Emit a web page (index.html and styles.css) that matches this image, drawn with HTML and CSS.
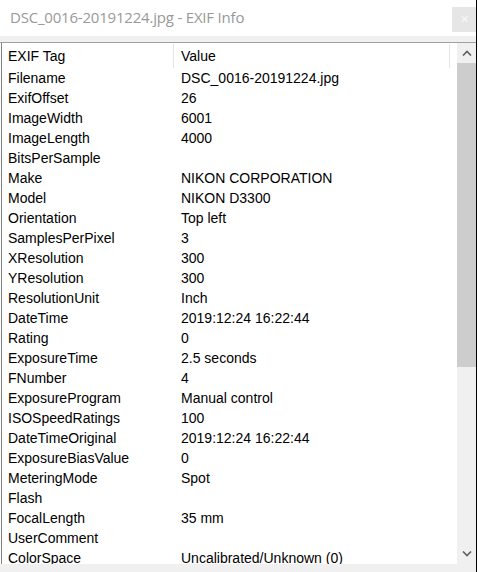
FILE: index.html
```html
<!DOCTYPE html>
<html lang="en">
<head>
  <meta charset="UTF-8" />
  <title>DSC_0016-20191224.jpg - EXIF Info</title>
  <link rel="stylesheet" href="styles.css">
</head>
<body>
  <div class="window">
    <div class="titlebar">
      <span class="title">DSC_0016-20191224.jpg - EXIF Info</span>
      <button class="close" aria-label="Close">&#x2715;</button>
    </div>

    <div class="client">
      <div class="list-frame">
        <div class="listview">
          <div class="rows">
            <div class="row header">
              <span class="cell tag">EXIF Tag</span>
              <span class="cell value">Value</span>
              <span class="cell filler"></span>
            </div>
            <div class="row"><span class="cell tag">Filename</span><span class="cell value">DSC_0016-20191224.jpg</span></div>
            <div class="row"><span class="cell tag">ExifOffset</span><span class="cell value">26</span></div>
            <div class="row"><span class="cell tag">ImageWidth</span><span class="cell value">6001</span></div>
            <div class="row"><span class="cell tag">ImageLength</span><span class="cell value">4000</span></div>
            <div class="row"><span class="cell tag">BitsPerSample</span><span class="cell value"></span></div>
            <div class="row"><span class="cell tag">Make</span><span class="cell value">NIKON CORPORATION</span></div>
            <div class="row"><span class="cell tag">Model</span><span class="cell value">NIKON D3300</span></div>
            <div class="row"><span class="cell tag">Orientation</span><span class="cell value">Top left</span></div>
            <div class="row"><span class="cell tag">SamplesPerPixel</span><span class="cell value">3</span></div>
            <div class="row"><span class="cell tag">XResolution</span><span class="cell value">300</span></div>
            <div class="row"><span class="cell tag">YResolution</span><span class="cell value">300</span></div>
            <div class="row"><span class="cell tag">ResolutionUnit</span><span class="cell value">Inch</span></div>
            <div class="row"><span class="cell tag">DateTime</span><span class="cell value">2019:12:24 16:22:44</span></div>
            <div class="row"><span class="cell tag">Rating</span><span class="cell value">0</span></div>
            <div class="row"><span class="cell tag">ExposureTime</span><span class="cell value">2.5 seconds</span></div>
            <div class="row"><span class="cell tag">FNumber</span><span class="cell value">4</span></div>
            <div class="row"><span class="cell tag">ExposureProgram</span><span class="cell value">Manual control</span></div>
            <div class="row"><span class="cell tag">ISOSpeedRatings</span><span class="cell value">100</span></div>
            <div class="row"><span class="cell tag">DateTimeOriginal</span><span class="cell value">2019:12:24 16:22:44</span></div>
            <div class="row"><span class="cell tag">ExposureBiasValue</span><span class="cell value">0</span></div>
            <div class="row"><span class="cell tag">MeteringMode</span><span class="cell value">Spot</span></div>
            <div class="row"><span class="cell tag">Flash</span><span class="cell value"></span></div>
            <div class="row"><span class="cell tag">FocalLength</span><span class="cell value">35 mm</span></div>
            <div class="row"><span class="cell tag">UserComment</span><span class="cell value"></span></div>
            <div class="row"><span class="cell tag">ColorSpace</span><span class="cell value">Uncalibrated/Unknown (0)</span></div>
          </div>

          <div class="scrollbar">
            <div class="arrow">
              <svg width="10" height="6" viewBox="0 0 10 6"><path d="M1 5.5 L5 1.5 L9 5.5" fill="none" stroke="#606060" stroke-width="1.6"/></svg>
            </div>
            <div class="track">
              <div class="thumb"></div>
            </div>
            <div class="arrow">
              <svg width="10" height="6" viewBox="0 0 10 6"><path d="M1 0.5 L5 4.5 L9 0.5" fill="none" stroke="#606060" stroke-width="1.6"/></svg>
            </div>
          </div>
        </div>
      </div>
    </div>
  </div>
</body>
</html>
```

FILE: styles.css
```css
html, body {
  margin: 0;
  background: #fff;
}

body {
  width: 478px;
  height: 572px;
  overflow: hidden;
}

.window {
  width: 476px;
  height: 572px;
  border-right: 1px solid #000;
  display: flex;
  flex-direction: column;
  font-family: 'Liberation Sans', Arial, sans-serif;
}

/* title bar */
.titlebar {
  flex: 0 0 36px;
  height: 36px;
  display: flex;
  align-items: flex-start;
  justify-content: space-between;
  background: #fff;
}

.title {
  font-family: 'Open Sans', 'Noto Sans', sans-serif;
  font-size: 15px;
  color: #999;
  margin: 7px 0 0 10px;
  letter-spacing: -0.2px;
}

.close {
  width: 24px;
  height: 25px;
  margin-top: 7px;
  padding: 0;
  border: none;
  background: #e6e6e6;
  color: #f7f7f7;
  font-size: 11px;
  line-height: 25px;
}

/* client area */
.client {
  flex: 1;
  min-height: 0;
  display: flex;
  flex-direction: column;
  background: #f0f0f0;
  padding: 6px 0 8px;
}

.list-frame {
  flex: 1;
  border-top: 1px solid #a0a0a0;
  background: #fff;
  padding-left: 1px;
  display: flex;
  min-height: 0;
}

.listview {
  flex: 1;
  display: flex;
  border-left: 1px solid #828282;
  min-height: 0;
}

.rows {
  flex: 1;
  overflow: hidden;
  padding-top: 1px;
  font-size: 14px;
  color: #000;
}

.row {
  display: grid;
  grid-template-columns: 172px 276px 1fr;
  height: 20px;
  line-height: 20px;
  white-space: nowrap;
}

.cell {
  padding-left: 6px;
  overflow: hidden;
}

.row .value {
  padding-left: 7px;
}

.header {
  height: 24px;
  line-height: 24px;
}

.header .tag,
.header .value {
  border-right: 1px solid #e5e5e5;
}

/* vertical scrollbar */
.scrollbar {
  width: 19px;
  display: flex;
  flex-direction: column;
  background: #f0f0f0;
}

.arrow {
  height: 20px;
  display: flex;
  align-items: center;
  justify-content: center;
}

.track {
  flex: 1;
}

.thumb {
  height: 304px;
  background: #cdcdcd;
}
```
